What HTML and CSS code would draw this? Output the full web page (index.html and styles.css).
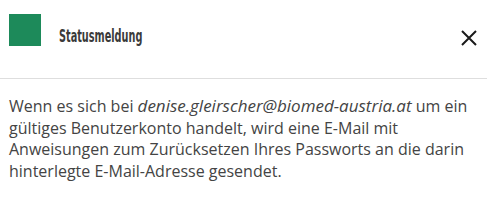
FILE: index.html
```html
<!DOCTYPE html>
<html lang="de">
<head>
<meta charset="utf-8">
<link rel="stylesheet" href="styles.css">
</head>
<body>
<div class="dialog">
  <div class="header">
    <div class="logo"></div>
    <div class="title-wrap"><h2 class="title">Statusmeldung</h2></div>
    <button class="close" aria-label="Schließen">
      <svg width="16" height="16" viewBox="0 0 16 16"><path d="M1 1L15 15M15 1L1 15" stroke="#1a1a1a" stroke-width="2" fill="none"/></svg>
    </button>
  </div>
  <div class="content">
    <p class="msg">Wenn es sich bei <em>denise.gleirscher@biomed-austria.at</em> um ein gültiges Benutzerkonto handelt, wird eine E-Mail mit Anweisungen zum Zurücksetzen Ihres Passworts an die darin hinterlegte E-Mail-Adresse gesendet.</p>
  </div>
</div>
</body>
</html>
```
FILE: styles.css
```css
html, body { margin: 0; padding: 0; background: #fff; }
.dialog { width: 487px; }
.header {
  display: flex;
  align-items: flex-end;
  padding: 14px 10px 32px 9px;
  border-bottom: 1px solid #dedede;
  height: 32px;
}
.logo { width: 32px; height: 32px; background: #1d8a5a; flex: none; }
.title-wrap { flex: 1; margin-left: 18px; }
.title {
  display: inline-block;
  margin: 0;
  font-family: "DejaVu Sans", sans-serif;
  font-stretch: condensed;
  font-weight: bold;
  font-size: 18px;
  line-height: 20px;
  color: #3a3a3a;
  transform: scaleX(0.6);
  transform-origin: left bottom;
}
.close {
  border: 0; background: none; padding: 0; margin: 0;
  width: 16px; height: 16px; display: block; cursor: pointer;
}
.close svg { display: block; }
.content { padding: 16px 9px; }
.msg {
  margin: 0;
  font-family: "Open Sans", sans-serif;
  font-size: 16px;
  line-height: 21.6px;
  color: #444;
}
.msg em { font-style: italic; font-size: 17px; }
```
